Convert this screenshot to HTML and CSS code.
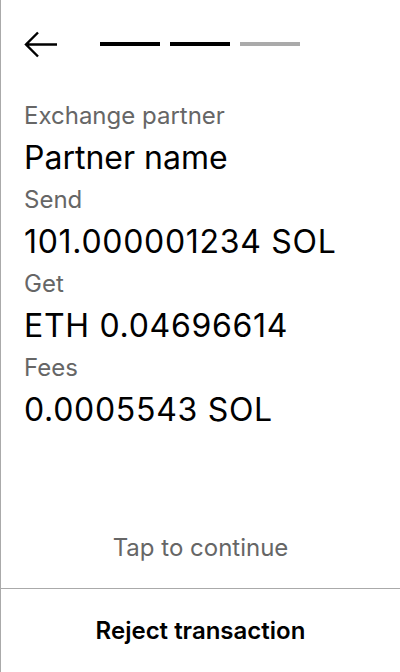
FILE: index.html
```html
<!DOCTYPE html>
<html>
<head>
<meta charset="utf-8">
<link rel="stylesheet" href="styles.css">
</head>
<body>
<div class="screen">
  <div class="header">
    <svg class="back" width="34" height="28" viewBox="0 0 34 28">
      <path d="M2 13.5 H33 M14 1.5 L2 13.5 L14 25.5" fill="none" stroke="#000" stroke-width="2.4"/>
    </svg>
    <div class="steps">
      <span class="step done"></span>
      <span class="step done"></span>
      <span class="step todo"></span>
    </div>
  </div>
  <div class="content">
    <div class="label">Exchange partner</div>
    <div class="value">Partner name</div>
    <div class="label">Send</div>
    <div class="value num">101.000001234 SOL</div>
    <div class="label">Get</div>
    <div class="value num">ETH 0.04696614</div>
    <div class="label">Fees</div>
    <div class="value num">0.0005543 SOL</div>
  </div>
  <div class="tap">Tap to continue</div>
  <div class="footer">Reject transaction</div>
</div>
</body>
</html>
```

FILE: styles.css
```css
html, body {
  margin: 0;
  padding: 0;
  background: #fff;
}
body {
  font-family: Inter, "Noto Sans", sans-serif;
  color: #000;
}
.screen {
  width: 400px;
  height: 672px;
  box-sizing: border-box;
  border-left: 1px solid #aaa;
  display: flex;
  flex-direction: column;
}
.header {
  height: 74px;
  padding: 16px 0 0 23px;
  box-sizing: border-box;
  display: flex;
  align-items: center;
  gap: 42px;
}
.back {
  display: block;
}
.steps {
  display: flex;
  gap: 10px;
  margin-top: -3px;
}
.step {
  display: block;
  width: 60px;
  height: 4px;
}
.step.done { background: #000; }
.step.todo { background: #aaa; }
.content {
  padding: 24px 0 0 23px;
  flex: 1;
}
.label {
  font-size: 24px;
  line-height: 36px;
  color: #666;
}
.value {
  font-size: 32px;
  line-height: 48px;
  color: #000;
}
.value.num {
  letter-spacing: 0.7px;
}
.tap {
  text-align: center;
  font-size: 24px;
  line-height: 36px;
  color: #666;
  padding-bottom: 22px;
}
.footer {
  border-top: 1px solid #aaa;
  height: 84px;
  box-sizing: border-box;
  display: flex;
  align-items: center;
  justify-content: center;
  font-size: 24px;
  font-weight: 600;
  padding-bottom: 1px;
}
```
